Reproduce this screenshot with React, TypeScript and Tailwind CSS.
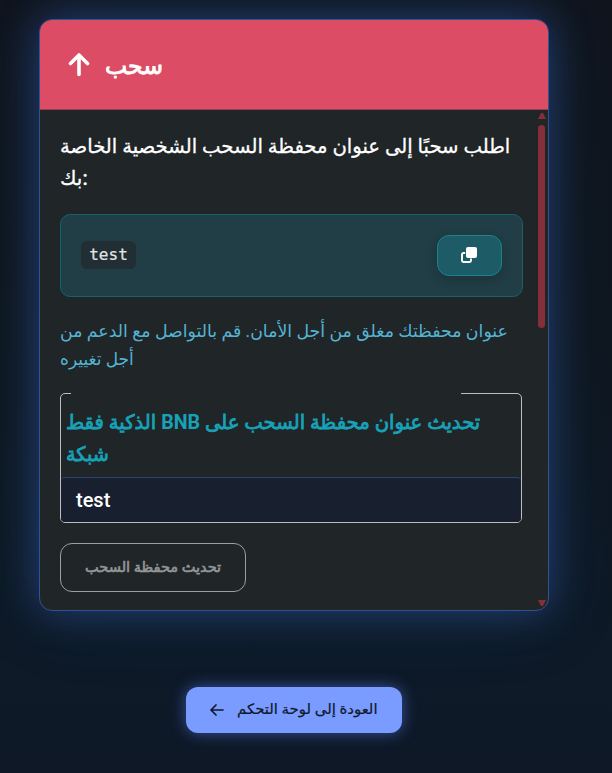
import type { ReactNode } from "react";

const sans = "font-[Roboto,'Noto_Sans','DejaVu_Sans',sans-serif]";

function Line({ children, className = "", dir = "ltr" }: { children: ReactNode; className?: string; dir?: "ltr" | "rtl" }) {
  return (
    <div className="flex">
      <span dir={dir} className={`block origin-left whitespace-nowrap ${className}`}>
        {children}
      </span>
    </div>
  );
}

function CopyIcon() {
  return (
    <svg viewBox="0 0 16 16" className="mr-px mb-px h-4 w-4 text-white" fill="none">
      <path d="M4.2 6H2.4C1.6 6 1 6.6 1 7.4v6.2c0 .8.6 1.4 1.4 1.4H8.6c.8 0 1.4-.6 1.4-1.4v-2.1" stroke="currentColor" strokeWidth="1.9" />
      <rect x="5" y="0" width="11" height="11" rx="2" fill="currentColor" />
    </svg>
  );
}

export default function App() {
  return (
    <main className={`flex h-[773px] w-[612px] flex-col overflow-hidden bg-[linear-gradient(180deg,#10151e_0%,#0f1720_45%,#0e1a28_88%,#0e1827_100%)] ${sans}`}>
      <section className="mt-[19px] ml-[39px] flex h-[592px] w-[510px] flex-col overflow-hidden rounded-[13px] border border-[#315292] bg-[#202528] shadow-[0_0_40px_rgba(65,110,220,0.42),0_0_75px_rgba(23,80,120,0.22)]">
        <header className="flex h-[90px] shrink-0 items-center border-b border-[#943d4d] bg-[#dc4c64] pl-7 text-white">
          <svg viewBox="0 0 22 24" className="h-6 w-[22px]" fill="none" stroke="currentColor" strokeWidth="3.6" strokeLinecap="round" strokeLinejoin="round">
            <path d="M11 21.5V2M2.5 10.5 11 2l8.5 8.5" />
          </svg>
          <h1 className="mt-[3px] ml-[15px] text-[24px] leading-8 font-normal">
            <Line className="scale-x-[0.98] [-webkit-text-stroke:0.9px_currentColor]">سحب</Line>
          </h1>
        </header>
        <div className="flex min-h-0 flex-1">
          <div className="ml-5 flex w-[463px] shrink-0 flex-col pt-5">
            <div className="text-[20px] leading-8 font-medium text-white">
              <Line className="scale-x-[0.981] [-webkit-text-stroke:0.3px_currentColor]">اطلب سحبًا إلى عنوان محفظة السحب الشخصية الخاصة</Line>
              <Line className="[-webkit-text-stroke:0.3px_currentColor]">بك:</Line>
            </div>
            <div className="mt-5 flex h-[83px] items-center justify-between rounded-[10px] border border-[#17616c] bg-[#213d45] px-5">
              <code className="mb-[2px] flex h-7 w-[55px] items-center justify-center rounded-md bg-[#212e34] font-['DejaVu_Sans_Mono',monospace] text-[16px] text-[#e2e5e5] [-webkit-text-stroke:0.2px_currentColor]">test</code>
              <button className="flex h-[41px] w-[65px] items-center justify-center rounded-[12px] border border-[#1c8190] bg-[#1d5b67] shadow-[0_4px_12px_rgba(0,0,0,0.16)]">
                <CopyIcon />
              </button>
            </div>
            <div className="mt-5 text-[17.6px] leading-7 font-normal text-[#54b4d3]">
              <Line className="scale-x-[0.985]">عنوان محفظتك مغلق من أجل الأمان. قم بالتواصل مع الدعم من</Line>
              <Line className="scale-x-[0.965]">أجل تغييره</Line>
            </div>
            <div className="relative mt-5 flex h-[130px] w-[462px] flex-col rounded-[5px] border border-[#bdbdbd]">
              <span className="absolute -top-px left-[10px] h-px w-[390px] bg-[#202528]" />
              <div className="h-[83px] pt-3 pl-[5px] text-[20px] leading-8 font-normal text-[#17a2b8]">
                <Line dir="rtl" className="scale-x-[0.981] [-webkit-text-stroke:0.8px_currentColor]">
                  تحديث عنوان محفظة السحب على <span className="font-bold [-webkit-text-stroke:0]">BNB</span> الذكية فقط
                </Line>
                <Line className="scale-x-[0.96] [-webkit-text-stroke:0.8px_currentColor]">شبكة</Line>
              </div>
              <div className="flex h-[45px] items-center rounded-[4px] border-t border-[#284477] bg-[#18202f] pl-[15px] text-[20px] font-medium text-white">test</div>
            </div>
            <button className="mt-5 flex h-[49px] w-[186px] items-center rounded-[12px] border border-[#9d9fa0] pl-6 text-[14px] font-normal text-[#949697]">
              <Line className="scale-x-[1.04] [-webkit-text-stroke:0.6px_currentColor]">تحديث محفظة السحب</Line>
            </button>
          </div>
          <div className="ml-[14px] flex w-[9px] flex-col items-center pt-[3px] pb-1">
            <svg viewBox="0 0 8 6" className="h-[6px] w-2 shrink-0" fill="#842f3a"><path d="M0 6 3 0h2l3 6Z" /></svg>
            <span className="mt-[6px] h-[203px] w-[7px] shrink-0 rounded-[4px] bg-[#842f3a]" />
            <svg viewBox="0 0 8 6" className="mt-auto h-[6px] w-2 shrink-0" fill="#842f3a"><path d="M0 0h8L5 6H3Z" /></svg>
          </div>
        </div>
      </section>
      <button className="mt-[76px] ml-[186px] flex h-[46px] w-[216px] items-center rounded-[12px] bg-[#7a9bff] pl-6 text-[14.4px] text-[#10182a] shadow-[0_0_15px_rgba(88,130,255,0.55)]">
        <svg viewBox="0 0 14 12" className="mr-[13px] h-3 w-[14px]" fill="none" stroke="currentColor" strokeWidth="1.7" strokeLinecap="round" strokeLinejoin="round">
          <path d="M13 6H1M6 1 1 6l5 5" />
        </svg>
        <Line className="scale-x-[1.035] [-webkit-text-stroke:0.2px_currentColor]">العودة إلى لوحة التحكم</Line>
      </button>
    </main>
  );
}
